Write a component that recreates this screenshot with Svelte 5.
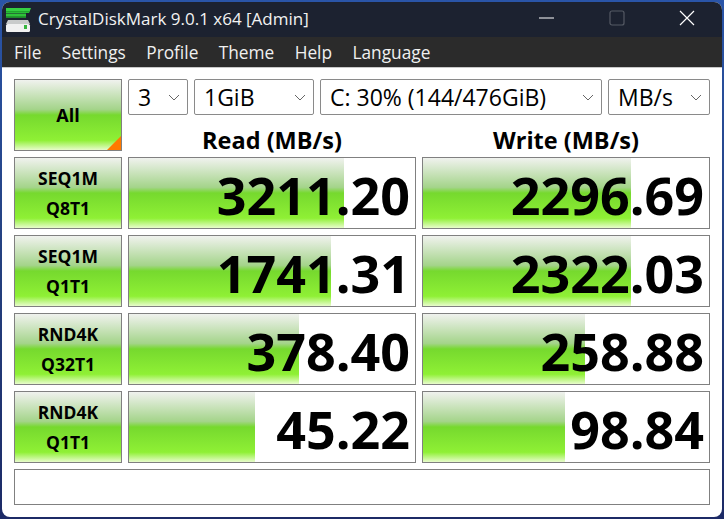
<script>
  const menu = ["File", "Settings", "Profile", "Theme", "Help", "Language"];
  const rows = [
    { a: "SEQ1M", b: "Q8T1", read: "3211.20", readW: 215, write: "2296.69", writeW: 208 },
    { a: "SEQ1M", b: "Q1T1", read: "1741.31", readW: 202, write: "2322.03", writeW: 208 },
    { a: "RND4K", b: "Q32T1", read: "378.40", readW: 170, write: "258.88", writeW: 162 },
    { a: "RND4K", b: "Q1T1", read: "45.22", readW: 126, write: "98.84", writeW: 142 }
  ];
  const selects = [
    { label: "3", cls: "s-count" },
    { label: "1GiB", cls: "s-size" },
    { label: "C: 30% (144/476GiB)", cls: "s-drive" },
    { label: "MB/s", cls: "s-unit" }
  ];
</script>

<div class="desktop">
  <div class="window">
    <div class="titlebar">
      <svg class="logo" width="26" height="26" viewBox="0 0 26 26">
        <path d="M1 1h25l-2 5H1z" fill="#35d043" />
        <rect x="1" y="4" width="23" height="1.5" fill="#1fa82c" />
        <path d="M1 6.5h20v4H1z" fill="#2fc23a" />
        <rect x="1" y="9" width="20" height="1.5" fill="#1f9a2a" />
        <path d="M3 13h20l2 4H1z" fill="#c9cbcb" />
        <rect x="1" y="17" width="24" height="8" rx="1.5" fill="#f1f1f1" />
        <rect x="19" y="18" width="3" height="4" fill="#37b53f" />
      </svg>
      <span class="title">CrystalDiskMark 9.0.1 x64 [Admin]</span>
      <div class="controls">
        <svg width="16" height="16" viewBox="0 0 16 16"><path d="M0 8h15" stroke="#fff" stroke-width="1" /></svg>
        <svg width="16" height="16" viewBox="0 0 16 16"><rect x="1" y="1" width="14" height="14" rx="2" fill="none" stroke="#555a64" stroke-width="1.2" /></svg>
        <svg width="16" height="16" viewBox="0 0 16 16"><path d="M1 1l14 14M15 1L1 15" stroke="#fff" stroke-width="1.2" /></svg>
      </div>
    </div>

    <nav class="menubar">
      {#each menu as item}
        <span>{item}</span>
      {/each}
    </nav>

    <div class="body">
      <button class="tile all">All</button>

      <div class="toolbar">
        {#each selects as s}
          <div class="select {s.cls}">
            <span>{s.label}</span>
            <svg width="12" height="7" viewBox="0 0 12 7"><path d="M1 1l5 5 5-5" fill="none" stroke="#666" stroke-width="1" /></svg>
          </div>
        {/each}
      </div>

      <div class="head">Read (MB/s)</div>
      <div class="head">Write (MB/s)</div>

      {#each rows as r}
        <button class="tile">{r.a}<br />{r.b}</button>
        <div class="value" style="background-size: {r.readW}px 100%">{r.read}</div>
        <div class="value" style="background-size: {r.writeW}px 100%">{r.write}</div>
      {/each}

      <div class="message"></div>
    </div>
  </div>
</div>

<style>
  :global(body) {
    margin: 0;
    background: #1c2f78;
  }

  .desktop {
    width: 724px;
    height: 519px;
    box-sizing: border-box;
    padding: 2px;
    background: linear-gradient(180deg, #2a55a8 0%, #24407f 50%, #1c2a66 100%);
    font-family: "Open Sans", "Noto Sans", sans-serif;
    overflow: hidden;
  }

  .window {
    height: 515px;
    border-radius: 8px;
    overflow: hidden;
    display: flex;
    flex-direction: column;
    background: #fff;
  }

  .titlebar {
    height: 35px;
    flex: none;
    background: #1c2230;
    color: #f2f2f2;
    display: flex;
    align-items: center;
    padding-left: 3px;
  }

  .logo {
    margin-right: 7px;
  }

  .title {
    font-size: 17px;
    margin-top: -2px;
  }

  .controls {
    margin-left: auto;
    display: flex;
    gap: 54px;
    padding-right: 27px;
    align-items: center;
    margin-top: -3px;
  }

  .menubar {
    height: 30px;
    flex: none;
    background: #2b2b2b;
    color: #f0f0f0;
    font-size: 17.3px;
    display: flex;
    align-items: center;
    gap: 20.4px;
    padding-left: 12px;
    border-bottom: 1px solid #c8c8c8;
  }

  .body {
    display: grid;
    grid-template-columns: 108px 288px 288px;
    grid-template-rows: 36px 30px repeat(4, 72px) 36px;
    gap: 6px;
    padding: 11px 12px;
  }

  .tile {
    box-sizing: border-box;
    border: 1.5px solid #808080;
    padding: 0;
    font: 700 17.5px/30px "Open Sans", "Noto Sans", sans-serif;
    color: #000;
    background: linear-gradient(180deg, #f0f2ee 0%, #a4d48a 42%, #76d92e 50%, #8ff035 86%, #e8fccc 100%);
  }

  .all {
    grid-row: 1 / span 2;
    position: relative;
    font-size: 18px;
  }

  .all::after {
    content: "";
    position: absolute;
    right: 0;
    bottom: 0;
    width: 14px;
    height: 14px;
    background: #ff7a00;
    clip-path: polygon(100% 0, 100% 100%, 0 100%);
  }

  .toolbar {
    grid-column: 2 / span 2;
    display: flex;
    gap: 6px;
  }

  .select {
    box-sizing: border-box;
    border: 1px solid #8a8a8a;
    border-radius: 2px;
    background: #fff;
    color: #000;
    font-size: 23px;
    display: flex;
    align-items: center;
    justify-content: space-between;
    padding: 0 7px 0 9px;
  }

  .s-count { width: 60px; }
  .s-size { width: 120px; }
  .s-drive { width: 282px; }
  .s-unit { width: 102px; }

  .head {
    font-size: 23.5px;
    font-weight: 700;
    text-align: center;
    color: #000;
    line-height: 38px;
  }

  .value {
    box-sizing: border-box;
    border: 1.5px solid #808080;
    font-size: 52px;
    font-weight: 700;
    color: #000;
    text-align: right;
    line-height: 74px;
    padding-right: 5px;
    background-color: #fff;
    background-image: linear-gradient(180deg, #f0f2ee 0%, #a4d48a 42%, #76d92e 50%, #8ff035 86%, #e8fccc 100%);
    background-repeat: no-repeat;
    background-position: 0 0;
  }

  .message {
    grid-column: 1 / -1;
    border: 1.5px solid #808080;
    background: #fff;
  }
</style>
